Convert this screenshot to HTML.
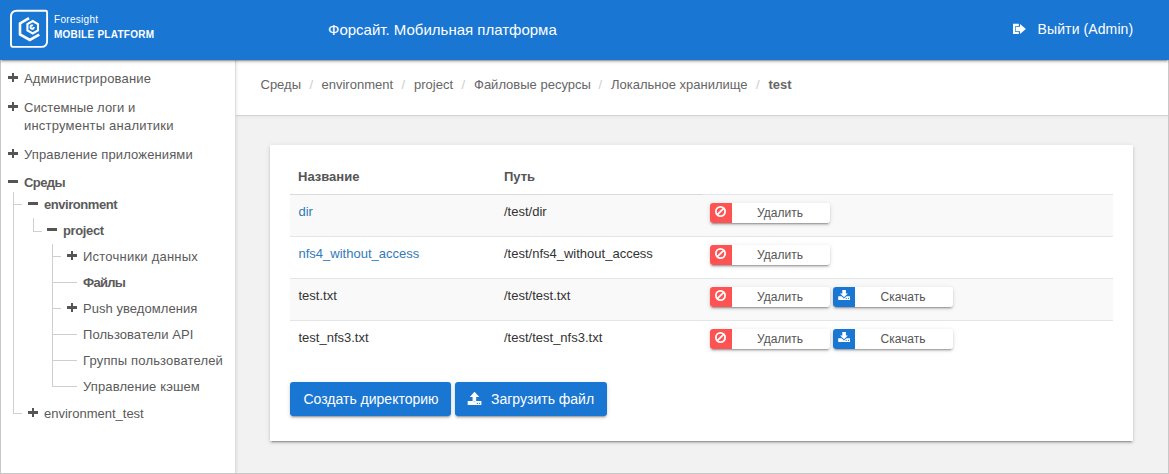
<!DOCTYPE html>
<html><head><meta charset="utf-8">
<style>
*{box-sizing:border-box;margin:0;padding:0}
html,body{width:1169px;height:474px;overflow:hidden;background:#f2f2f2;font-family:"Liberation Sans",sans-serif}
#frame{position:absolute;left:0;top:0;width:1169px;height:474px;border:1px solid #c8c8c8;border-top:none;z-index:9;pointer-events:none}
#hdr{position:absolute;left:0;top:0;width:1169px;height:60px;background:#1976d2;color:#fff;box-shadow:0 2px 2px 0 rgba(0,0,0,.14),0 3px 1px -2px rgba(0,0,0,.2),0 1px 5px 0 rgba(0,0,0,.12);z-index:10}
#side{position:absolute;left:0;top:0;width:236px;height:474px;background:#fff;border-right:1px solid #dcdcdc;box-shadow:1px 0 3px rgba(0,0,0,.08);z-index:3;color:#555}
#crumb{position:absolute;left:236px;top:60px;width:933px;height:56px;background:#fff;border-bottom:1px solid #d4d4d4;box-shadow:0 1px 3px rgba(0,0,0,.05);z-index:2}
#crumbt{position:absolute;left:0;top:0;z-index:4;color:#666}
#card{position:absolute;left:270px;top:145px;width:863px;height:296px;background:#fff;box-shadow:0 2px 2px 0 rgba(0,0,0,.14),0 3px 1px -2px rgba(0,0,0,.2),0 1px 5px 0 rgba(0,0,0,.12)}
#cardt{position:absolute;left:0;top:0;z-index:1}
.t{position:absolute;white-space:nowrap;line-height:1}
.ic{position:absolute}
.ln{position:absolute;background:#cfcfcf}
.pl,.mi{position:absolute;width:10px;height:10px}
.pl:before,.mi:before{content:"";position:absolute;left:0;top:3.4px;width:10px;height:2.7px;background:#555}
.pl:after{content:"";position:absolute;left:3.6px;top:0;width:2.8px;height:9.5px;background:#555}
.rowbg{position:absolute;left:290px;width:823px;height:41px;background:#f9f9f9}
.hl{position:absolute;left:290px;width:823px;height:1px;background:#e3e6e8}
.btn{position:absolute;width:120px;height:20px;background:#fff;border-radius:3px;box-shadow:0 2px 2px 0 rgba(0,0,0,.14),0 3px 1px -2px rgba(0,0,0,.2),0 1px 5px 0 rgba(0,0,0,.12);overflow:hidden}
.bi{position:absolute;left:0;top:0;width:22px;height:20px}
.bi svg{position:absolute;left:0;top:0}
.red{background:#ff5252}.blue{background:#1976d2}
.bt{position:absolute;left:21px;right:1px;top:0;height:20px;line-height:20px;text-align:center;font-size:12px;color:#555}
.pbtn{position:absolute;top:382px;height:34px;background:#1976d2;border-radius:3px;box-shadow:0 2px 2px 0 rgba(0,0,0,.14),0 3px 1px -2px rgba(0,0,0,.2),0 1px 5px 0 rgba(0,0,0,.12)}
</style></head><body>
<div id="side"></div>
<div id="crumb"></div>
<div id="card"></div>
<div id="cardt">
<div class="rowbg" style="top:195px"></div>
<div class="rowbg" style="top:279px"></div>
<div class="hl" style="top:194px"></div>
<div class="hl" style="top:236px"></div>
<div class="hl" style="top:278px"></div>
<div class="hl" style="top:320px"></div>
<div class="hl" style="top:194px;width:412px;background:#dadada"></div>
<div class="t" style="left:298px;top:170.00px;font-size:13px;font-weight:bold;color:#555">Название</div>
<div class="t" style="left:504px;top:170.00px;font-size:13px;font-weight:bold;color:#555">Путь</div>
<div class="t" style="left:298.5px;top:205.00px;font-size:13px;color:#337ab7">dir</div>
<div class="t" style="left:504px;top:205.00px;font-size:13px;color:#333">/test/dir</div>
<div class="btn" style="left:710px;top:203px"><span class="bi red"><svg width="22" height="20" viewBox="0 0 22 20"><circle cx="10.5" cy="8.5" r="4.6" fill="none" stroke="#fff" stroke-width="1.8"/><path d="M7.3 11.7 L13.7 5.3" stroke="#fff" stroke-width="1.8"/></svg></span><span class="bt">Удалить</span></div>
<div class="t" style="left:298.5px;top:247.00px;font-size:13px;color:#337ab7">nfs4_without_access</div>
<div class="t" style="left:504px;top:247.00px;font-size:13px;color:#333">/test/nfs4_without_access</div>
<div class="btn" style="left:710px;top:245px"><span class="bi red"><svg width="22" height="20" viewBox="0 0 22 20"><circle cx="10.5" cy="8.5" r="4.6" fill="none" stroke="#fff" stroke-width="1.8"/><path d="M7.3 11.7 L13.7 5.3" stroke="#fff" stroke-width="1.8"/></svg></span><span class="bt">Удалить</span></div>
<div class="t" style="left:298.5px;top:289.00px;font-size:13px;color:#333">test.txt</div>
<div class="t" style="left:504px;top:289.00px;font-size:13px;color:#333">/test/test.txt</div>
<div class="btn" style="left:710px;top:287px"><span class="bi red"><svg width="22" height="20" viewBox="0 0 22 20"><circle cx="10.5" cy="8.5" r="4.6" fill="none" stroke="#fff" stroke-width="1.8"/><path d="M7.3 11.7 L13.7 5.3" stroke="#fff" stroke-width="1.8"/></svg></span><span class="bt">Удалить</span></div>
<div class="btn" style="left:833px;top:287px"><span class="bi blue"><svg width="22" height="20" viewBox="0 0 22 20"><path d="M9.3 3 H12.9 V6.6 H14.9 L11 10.3 L7.1 6.6 H9.3 Z" fill="#fff"/><path d="M5.2 9.3 H8.6 L11 11.4 L13.4 9.3 H17 V12.9 H5.2 Z" fill="#fff"/><circle cx="13.2" cy="11.4" r="0.55" fill="#1976d2"/><circle cx="15.4" cy="11.4" r="0.55" fill="#1976d2"/></svg></span><span class="bt">Скачать</span></div>
<div class="t" style="left:298.5px;top:331.00px;font-size:13px;color:#333">test_nfs3.txt</div>
<div class="t" style="left:504px;top:331.00px;font-size:13px;color:#333">/test/test_nfs3.txt</div>
<div class="btn" style="left:710px;top:329px"><span class="bi red"><svg width="22" height="20" viewBox="0 0 22 20"><circle cx="10.5" cy="8.5" r="4.6" fill="none" stroke="#fff" stroke-width="1.8"/><path d="M7.3 11.7 L13.7 5.3" stroke="#fff" stroke-width="1.8"/></svg></span><span class="bt">Удалить</span></div>
<div class="btn" style="left:833px;top:329px"><span class="bi blue"><svg width="22" height="20" viewBox="0 0 22 20"><path d="M9.3 3 H12.9 V6.6 H14.9 L11 10.3 L7.1 6.6 H9.3 Z" fill="#fff"/><path d="M5.2 9.3 H8.6 L11 11.4 L13.4 9.3 H17 V12.9 H5.2 Z" fill="#fff"/><circle cx="13.2" cy="11.4" r="0.55" fill="#1976d2"/><circle cx="15.4" cy="11.4" r="0.55" fill="#1976d2"/></svg></span><span class="bt">Скачать</span></div>
<div class="pbtn" style="left:290px;width:161px"></div>
<div class="t" style="left:303.5px;top:392.15px;font-size:14px;color:#fff">Создать директорию</div>
<div class="pbtn" style="left:455px;width:152px"></div>
<svg class="ic" style="left:460px;top:385px" width="40" height="27" viewBox="0 0 40 27">
<path d="M14.5 6.8 L19.3 12 H16.2 V16.6 H12.6 V12 H9.8 Z" fill="#fff"/>
<path d="M7.7 16.1 H12.9 Q14.4 17.6 15.9 16.1 H21.4 V19.9 H7.7 Z" fill="#fff"/>
<circle cx="17.4" cy="18.3" r="0.6" fill="#1976d2"/><circle cx="19.4" cy="18.3" r="0.6" fill="#1976d2"/></svg>
<div class="t" style="left:491px;top:392.15px;font-size:14px;color:#fff">Загрузить файл</div>
</div>
<div id="crumbt">
<div class="t" style="left:260.5px;top:78.00px;font-size:13px">Среды</div>
<div class="t" style="left:309.5px;top:78.00px;font-size:13px;color:#ccc">/</div>
<div class="t" style="left:321.5px;top:78.00px;font-size:13px">environment</div>
<div class="t" style="left:461.5px;top:78.00px;font-size:13px;color:#ccc">/</div>
<div class="t" style="left:414px;top:78.00px;font-size:13px">project</div>
<div class="t" style="left:598.5px;top:78.00px;font-size:13px;color:#ccc">/</div>
<div class="t" style="left:474px;top:78.00px;font-size:13px">Файловые ресурсы</div>
<div class="t" style="left:611px;top:78.00px;font-size:13px">Локальное хранилище</div>
<div class="t" style="left:756px;top:78.00px;font-size:13px;color:#ccc">/</div>
<div class="t" style="left:768.5px;top:78.00px;font-size:13px;font-weight:bold">test</div>
<div class="t" style="left:401.5px;top:78.00px;font-size:13px;color:#ccc">/</div>
</div>
<div id="hdr">
<svg class="ic" style="left:0;top:0" width="60" height="60" viewBox="0 0 60 60">
  <path d="M17 10.8 H45.7 Q47.1 10.8 47.1 12.2 V41 Q47.1 46.9 41.3 46.9 H13.5 Q11 46.9 11 44.4 V16.8 Q11 10.8 17 10.8Z" fill="none" stroke="#fff" stroke-width="1.9"/>
  <path d="M29 18.2 L20 23.4 V34.4 L29.8 40 L39.3 34.6" fill="none" stroke="#fff" stroke-width="2.6"/>
  <path d="M32.7 21 L38 24.1 V30.4 L32.7 33.5 L27.4 30.4 V24.1 Z" fill="none" stroke="#fff" stroke-width="2.1"/>
  <path d="M33.9 27.1 A1.7 1.7 0 1 1 33.05 25.6" fill="none" stroke="#fff" stroke-width="1.9"/>
</svg>
<div class="t" style="left:54px;top:14.54px;font-size:10px;letter-spacing:0.3px">Foresight</div>
<div class="t" style="left:54px;top:29.74px;font-size:10px;font-weight:bold;letter-spacing:0.25px">MOBILE PLATFORM</div>
<div class="t" style="left:328px;top:22.30px;font-size:15px">Форсайт. Мобильная платформа</div>
<div class="t" style="left:1037.6px;top:22.15px;font-size:14px;letter-spacing:0.1px">Выйти (Admin)</div>
<svg class="ic" style="left:1012px;top:23px" width="16" height="12" viewBox="0 0 16 12">
  <path d="M6.8 1.9 H2.1 V10 H6.8" fill="none" stroke="#fff" stroke-width="2.2"/>
  <path d="M3.8 3.7 H8 V0.9 L13.9 6 L8 11.1 V8.2 H3.8 Z" fill="#fff"/>
</svg>
</div>
<div id="sidet" style="position:absolute;left:0;top:0;z-index:4;color:#5a5a5a">
<div class="t" style="left:24px;top:72.00px;font-size:13px;letter-spacing:0.19px">Администрирование</div>
<i class="pl" style="left:8px;top:72.6px"></i>
<div class="t" style="left:24px;top:101.00px;font-size:13px;letter-spacing:0.06px">Системные логи и</div>
<i class="pl" style="left:8px;top:101.6px"></i>
<div class="t" style="left:24px;top:119.00px;font-size:13px;letter-spacing:0.21px">инструменты аналитики</div>
<div class="t" style="left:24px;top:148.00px;font-size:13px;letter-spacing:0.13px">Управление приложениями</div>
<i class="pl" style="left:8px;top:148.6px"></i>
<div class="t" style="left:24px;top:176.00px;font-size:13px;font-weight:bold;letter-spacing:-0.58px">Среды</div>
<i class="mi" style="left:8px;top:176.6px"></i>
<div class="t" style="left:44px;top:198.00px;font-size:13px;font-weight:bold;letter-spacing:-0.45px">environment</div>
<i class="mi" style="left:28px;top:198.6px"></i>
<div class="t" style="left:63px;top:224.00px;font-size:13px;font-weight:bold;letter-spacing:-0.36px">project</div>
<i class="mi" style="left:47px;top:224.6px"></i>
<div class="t" style="left:83px;top:250.00px;font-size:13px;letter-spacing:0.23px">Источники данных</div>
<i class="pl" style="left:67px;top:250.6px"></i>
<div class="t" style="left:83px;top:276.00px;font-size:13px;font-weight:bold;letter-spacing:-0.68px">Файлы</div>
<div class="t" style="left:83px;top:302.00px;font-size:13px;letter-spacing:0.05px">Push уведомления</div>
<i class="pl" style="left:67px;top:302.6px"></i>
<div class="t" style="left:83px;top:328.00px;font-size:13px;letter-spacing:0.06px">Пользователи API</div>
<div class="t" style="left:83px;top:354.00px;font-size:13px;letter-spacing:0.165px">Группы пользователей</div>
<div class="t" style="left:83px;top:380.00px;font-size:13px;letter-spacing:0.12px">Управление кэшем</div>
<div class="t" style="left:44px;top:407.00px;font-size:13px;letter-spacing:0px">environment_test</div>
<i class="pl" style="left:28px;top:407.6px"></i>
<b class="ln" style="left:13px;top:192px;width:1px;height:222px"></b>
<b class="ln" style="left:13px;top:413px;width:9px;height:1px"></b>
<b class="ln" style="left:13px;top:204px;width:9px;height:1px"></b>
<b class="ln" style="left:33px;top:218px;width:1px;height:13px"></b>
<b class="ln" style="left:33px;top:231px;width:9px;height:1px"></b>
<b class="ln" style="left:52px;top:244px;width:1px;height:142px"></b>
<b class="ln" style="left:52px;top:256px;width:9px;height:1px"></b>
<b class="ln" style="left:52px;top:282px;width:25px;height:1px"></b>
<b class="ln" style="left:52px;top:308px;width:9px;height:1px"></b>
<b class="ln" style="left:52px;top:334px;width:25px;height:1px"></b>
<b class="ln" style="left:52px;top:360px;width:25px;height:1px"></b>
<b class="ln" style="left:52px;top:386px;width:25px;height:1px"></b>
</div>
<div id="frame"></div>
</body></html>
